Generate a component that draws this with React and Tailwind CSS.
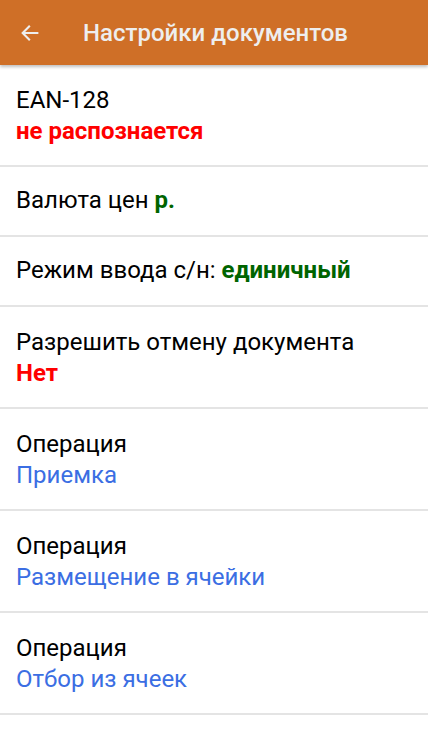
import React from "react";

const rows = [
  { label: "EAN-128", value: "не распознается", color: "text-[#ff0000] font-bold", two: true },
  { label: "Валюта цен ", inline: "р.", color: "text-[#006400] font-bold" },
  { label: "Режим ввода с/н: ", inline: "единичный", color: "text-[#006400] font-bold" },
  { label: "Разрешить отмену документа", value: "Нет", color: "text-[#ff0000] font-bold", two: true },
  { label: "Операция", value: "Приемка", color: "text-[#3b6ee3]", two: true },
  { label: "Операция", value: "Размещение в ячейки", color: "text-[#3b6ee3]", two: true },
  { label: "Операция", value: "Отбор из ячеек", color: "text-[#3b6ee3]", two: true },
];

export default function App() {
  return (
    <div className="w-[428px] h-[738px] bg-white overflow-hidden relative" style={{ fontFamily: "Roboto, 'Noto Sans', sans-serif" }}>
      <div className="h-[65px] bg-[#cf6f27] flex items-center relative z-10 shadow-[0_2px_3px_rgba(0,0,0,0.25)]">
        <div className="w-[60px] pl-[19px] flex items-center">
          <svg width="22" height="22" viewBox="0 0 24 24" fill="none">
            <path d="M20 12H4.5M11 5l-7 7 7 7" stroke="#eeeeee" strokeWidth="2.3" strokeLinecap="square" />
          </svg>
        </div>
        <div className="pl-[23px] text-[24px] font-medium text-[#eeeeee]">Настройки документов</div>
      </div>
      <div className="flex flex-col">
        {rows.map((r, i) => (
          <div
            key={i}
            className={`px-4 border-b-2 border-[#e4e4e4] text-[24px] leading-[31px] text-black ${
              r.two ? "pt-[20px] pb-[18px] h-[102px]" : "pt-[18px] pb-[19px] h-[70px]"
            }`}
          >
            {r.two ? (
              <>
                <div>{r.label}</div>
                <div className={r.color}>{r.value}</div>
              </>
            ) : (
              <div>
                {r.label}
                <span className={r.color}>{r.inline}</span>
              </div>
            )}
          </div>
        ))}
      </div>
    </div>
  );
}
